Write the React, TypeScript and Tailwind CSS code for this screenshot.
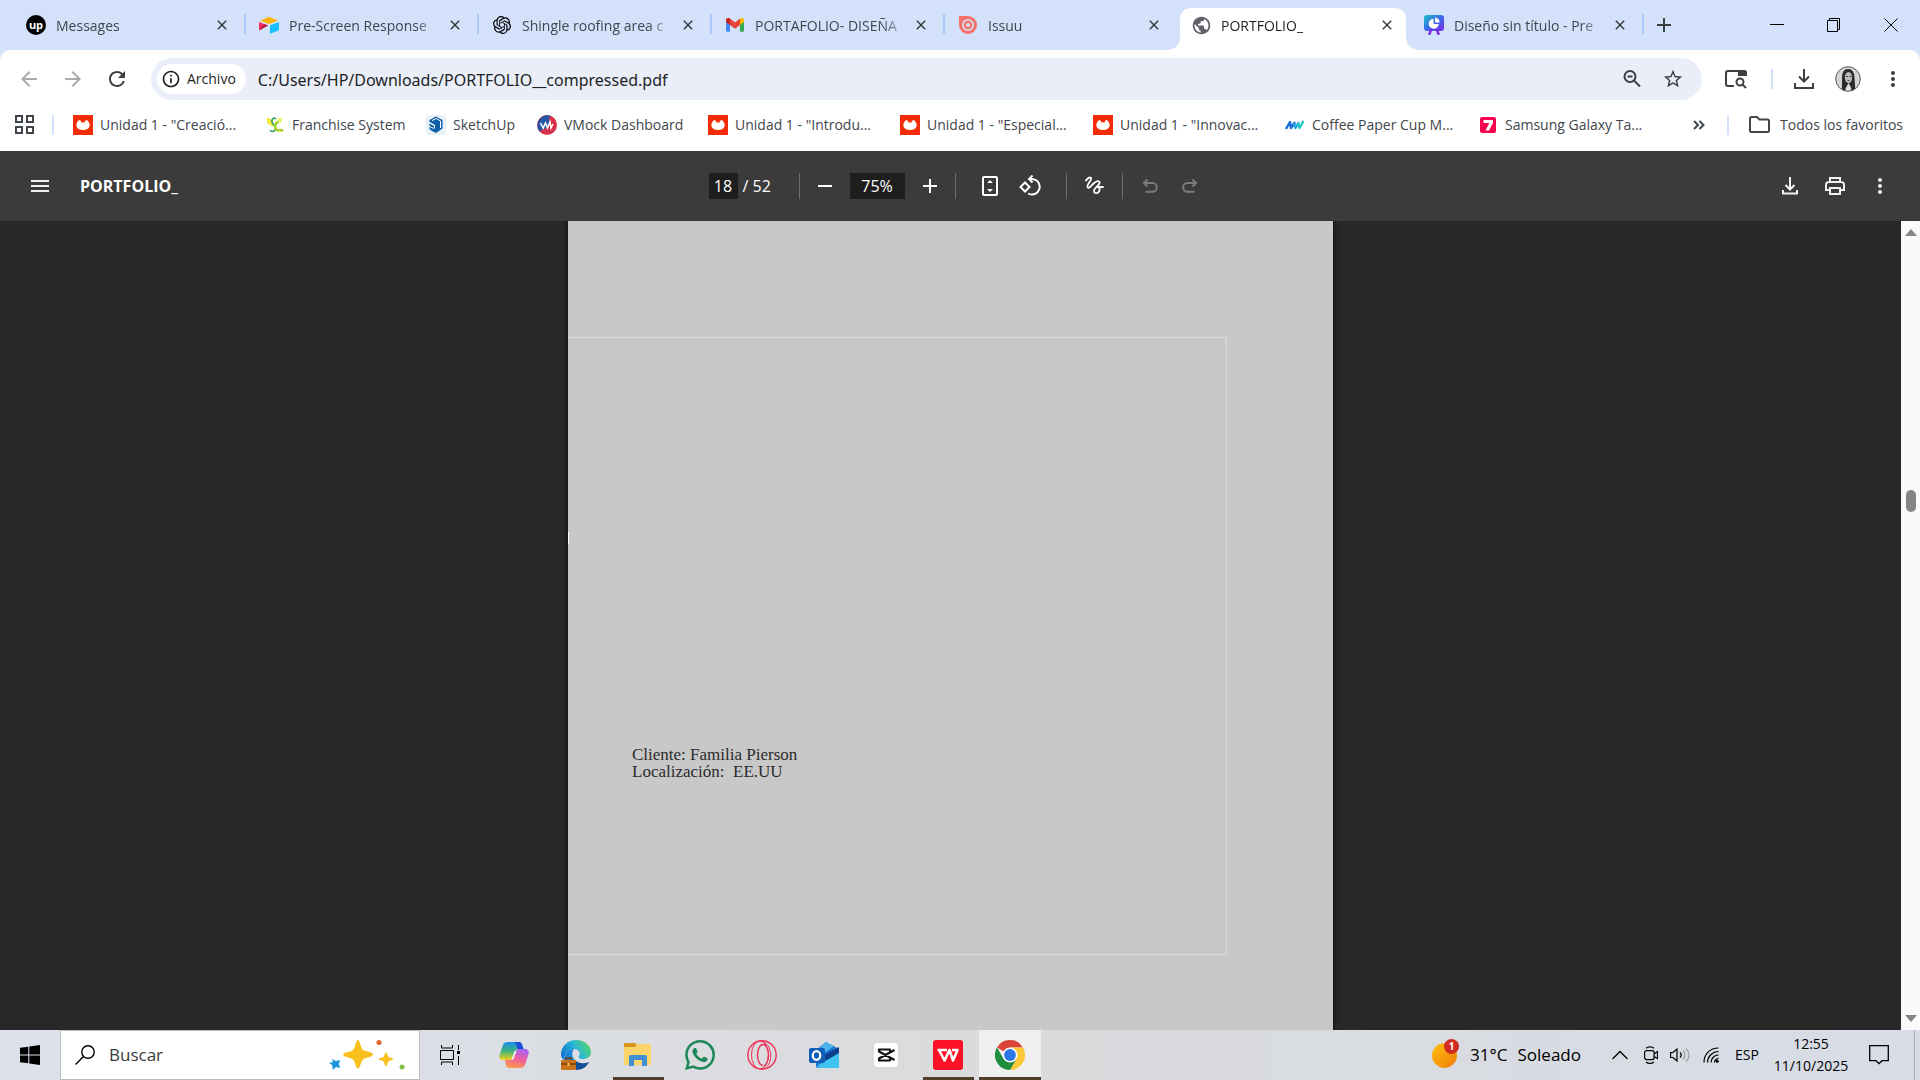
import React from "react";
import {
  MdArrowBack,
  MdArrowForward,
  MdClose,
  MdInfoOutline,
  MdMoreVert,
  MdPublic,
  MdRefresh,
  MdStarBorder,
} from "react-icons/md";
import { SiOpenai, SiWhatsapp } from "react-icons/si";
import clsx from "clsx";

/* ---------- Favicons ---------- */

function UpworkIcon() {
  return (
    <span className="flex items-center justify-center w-5 h-5 rounded-full bg-black text-white text-[11px] leading-none font-bold pb-0.5">
      up
    </span>
  );
}

function AirtableIcon() {
  return (
    <svg viewBox="0 0 20 20" className="w-5 h-5">
      <path d="M1 5.5 10 2l9 3.5-9 3.6z" fill="#fcb400" />
      <path d="M11 10.3 20 7v8.2l-9 3.6z" fill="#18bfff" />
      <path d="M0 7l9 3.6L0 15.4z" fill="#f82b60" />
      <path d="M0 15.4 5 9l4 1.6z" fill="#ba1e45" />
    </svg>
  );
}

function GmailIcon() {
  return (
    <svg viewBox="0 0 20 16" className="w-5 h-4">
      <path d="M1 3v10.5a1.3 1.3 0 0 0 1.3 1.3H5V6z" fill="#4285f4" />
      <path d="M15 6v8.8h2.7a1.3 1.3 0 0 0 1.3-1.3V3z" fill="#34a853" />
      <path d="M15 1.6V8l4-3V3c0-2-2-2.6-3.2-1.7z" fill="#fbbc04" />
      <path d="M5 8V1.6l5 3.8 5-3.8V8l-5 3.8z" fill="#ea4335" />
      <path d="M1 3v2l4 3V1.6l-.8-.4C3 .4 1 1.2 1 3z" fill="#c5221f" />
    </svg>
  );
}

function IssuuIcon() {
  return (
    <svg viewBox="0 0 20 20" className="w-5 h-5">
      <path d="M1 1h9a9 9 0 1 1-9 9z" fill="#f6716a" />
      <circle cx="10" cy="10" r="5.2" fill="none" stroke="#d7e2fa" strokeWidth="1.6" />
      <circle cx="10" cy="10" r="2" fill="#d7e2fa" />
    </svg>
  );
}

function PresentationIcon() {
  return (
    <svg viewBox="0 0 20 20" className="w-5 h-5">
      <defs>
        <linearGradient id="deck" x1="0" y1="0" x2="1" y2="1">
          <stop offset="0" stopColor="#12c2c4" />
          <stop offset="0.5" stopColor="#3d6be8" />
          <stop offset="1" stopColor="#7d2ae8" />
        </linearGradient>
      </defs>
      <path d="M3 0h14a3 3 0 0 1 3 3v10a3 3 0 0 1-3 3H3a3 3 0 0 1-3-3V3a3 3 0 0 1 3-3z" fill="url(#deck)" />
      <path d="M7 15l-1.5 4M13 15l1.5 4" stroke="#7d2ae8" strokeWidth="2.4" strokeLinecap="round" />
      <path d="M9.5 3.8V9h5.2A5 5 0 1 1 9.5 3.8z" fill="#fff" />
      <path d="M11 2.4A5 5 0 0 1 15.6 7.5H11z" fill="#fff" />
    </svg>
  );
}

function DomestikaIcon() {
  return (
    <svg viewBox="0 0 20 20" className="w-5 h-5">
      <path d="M0 0h20v20H0z" fill="#f22c06" />
      <path d="M6 5c1.200 0 2.400 1.300 2.700 3L10 7l1.300 1C11.600 6.300 12.800 5 14 5c2 1.800 3 4 2.600 6C16 13.600 13.500 15 10 15s-6-1.400-6.600-4C3 9 4 6.800 6 5z" fill="#fff" />
    </svg>
  );
}

function FranchiseIcon() {
  return (
    <svg viewBox="0 0 20 20" className="w-5 h-5" fill="none">
      <path d="M2 2l6 4v6l-6-4zM12 4l5-1-1 5z" fill="#f4ec3d" />
      <path d="M11 4C9 2 6 4 7 7s5 4 3 8c-1 2-4 2-5 0" stroke="#2aa05a" strokeWidth="1.600" />
      <path d="M14 7c-4 0-5 6-2 8 2 1 4-1 6 1" stroke="#a8d22b" strokeWidth="2.600" />
    </svg>
  );
}

function SketchUpIcon() {
  return (
    <svg viewBox="0 0 20 20" className="w-5 h-5" fill="none">
      <path d="M0 0h20v20H0z" fill="#e9f1f8" />
      <path d="M10 1.500l6.500 3.600v8.500L10 18l-5-2.600 4-2.300V10L3.500 7V5z" fill="#0f5fa6" />
      <path d="M4 8l5 2.800M4 11l4 2.200M6 5.500l4.500-2 4 2.500v7" stroke="#fff" />
      <path d="M3.500 8.600L8 11v2l-4.500-2zM3.500 12L8 14v2.500l-4.500-2.300z" fill="#0f5fa6" />
    </svg>
  );
}

function VMockIcon() {
  return (
    <svg viewBox="0 0 20 20" className="w-5 h-5">
      <circle cx="10" cy="10" r="10" fill="#d6304a" />
      <path d="M3 17A10 10 0 0 1 14 1C9 4 15 9 11 12s-6 1-8 5z" fill="#2456a8" />
      <path d="M3.500 8l2.700 5 2.300-5 2 5 2.500-6 1 6 2-4" stroke="#fff" strokeWidth="1.500" fill="none" />
    </svg>
  );
}

function MockupIcon() {
  return (
    <svg viewBox="0 0 20 20" className="w-5 h-5" fill="none" strokeWidth="2.400" strokeLinejoin="round">
      <path d="M1 14l4-7 1 6 4-6" stroke="#1c6fd6" />
      <path d="M9 8l1.500 5 3.500-6" stroke="#1aa3e0" />
      <path d="M13 8l1.500 5 4-7" stroke="#1fc6c2" />
    </svg>
  );
}

function SevenIcon() {
  return (
    <svg viewBox="0 0 16 16" className="w-4 h-4">
      <rect width="16" height="16" rx="2" fill="#f5054f" />
      <path d="M3.500 3h9.500v3L9 13.500H5.500L9.300 6H3.500z" fill="#fff" />
    </svg>
  );
}

/* ---------- Tab strip ---------- */

const tabs = [
  { title: "Messages", icon: <UpworkIcon /> },
  { title: "Pre-Screen Response", icon: <AirtableIcon /> },
  { title: "Shingle roofing area c", icon: <SiOpenai className="w-[18px] h-[18px]" /> },
  { title: "PORTAFOLIO- DISEÑA", icon: <GmailIcon /> },
  { title: "Issuu", icon: <IssuuIcon /> },
  { title: "PORTFOLIO_", icon: <MdPublic className="w-[21px] h-[21px] text-[#5f6368]" />, active: true },
  { title: "Diseño sin título - Pre", icon: <PresentationIcon /> },
];

function TabStrip() {
  return (
    <div className="flex items-end h-[50px] pl-[13px] bg-[#d3e1fa]">
      {tabs.map((tab, i) => {
        const bare = tab.active || tabs[i + 1]?.active;
        return (
          <div
            key={tab.title}
            className={clsx(
              "relative flex items-center w-[233px] min-w-0 h-[42px] pl-3 pr-4 pb-2",
              !bare && "after:absolute after:right-0 after:top-1.5 after:w-0.5 after:h-5 after:bg-[#a8c7fa]"
            )}
          >
            {tab.active && (
              <svg viewBox="0 0 254 42" preserveAspectRatio="none" className="absolute -left-3 top-0 w-[254px] h-[42px]">
                <path d="M0 42c9 0 14-5 14-14V12C14 4 18 0 26 0h202c8 0 12 4 12 12v16c0 9 5 14 14 14z" fill="#fff" />
              </svg>
            )}
            <span className="relative flex items-center justify-center w-[22px] shrink-0">{tab.icon}</span>
            <span
              className={clsx(
                "relative flex-1 ml-[9px] mr-1 pt-px whitespace-nowrap text-sm",
                "[mask-image:linear-gradient(to_right,black_82%,transparent)]",
                tab.active ? "text-[#1f1f1f]" : "text-[#41464d]"
              )}
            >
              {tab.title}
            </span>
            <button aria-label={"Cerrar " + tab.title} className="relative text-[#303236]">
              <MdClose className="w-4 h-4" />
            </button>
          </div>
        );
      })}
      <button aria-label="Nueva pestaña" className="flex items-center justify-center w-10 h-[34px] mb-2 text-[#3c4043]">
        <svg viewBox="0 0 14 14" className="w-3.5 h-3.5" stroke="currentColor" strokeWidth="2">
          <path d="M7 0v14M0 7h14" />
        </svg>
      </button>
      <div className="flex ml-auto mr-px self-start text-black">
        <button aria-label="Minimizar" className="flex items-center justify-center w-[57px] h-[49px]">
          <svg viewBox="0 0 14 14" className="w-3.5 h-3.5" stroke="currentColor">
            <path d="M0 6.500h14" />
          </svg>
        </button>
        <button aria-label="Restaurar" className="flex items-center justify-center w-[57px] h-[49px]">
          <svg viewBox="0 0 14 14" className="w-3.5 h-3.5" fill="none" stroke="currentColor">
            <path d="M.5 2.500h10v11H.5zM2.500 2.500V.5h10v11h-2" />
          </svg>
        </button>
        <button aria-label="Cerrar" className="flex items-center justify-center w-[57px] h-[49px]">
          <svg viewBox="0 0 14 14" className="w-3.5 h-3.5" stroke="currentColor">
            <path d="M.5.5l13 13M13.500.5l-13 13" />
          </svg>
        </button>
      </div>
    </div>
  );
}

/* ---------- Address bar ---------- */

function Avatar() {
  return (
    <svg viewBox="0 0 26 26" className="w-[26px] h-[26px]">
      <clipPath id="face">
        <circle cx="13" cy="13" r="12" />
      </clipPath>
      <g clipPath="url(#face)">
        <path d="M0 0h26v26H0z" fill="#d4d4d4" />
        <path d="M7 26V12c0-6 2-9 6-9s6.500 3 6.500 9l1 14z" fill="#2b2b2b" />
        <ellipse cx="13.500" cy="11.500" rx="3.600" ry="5.500" fill="#bdbdbd" />
        <path d="M10 26c0-4 2-6 3.500-9 2 3 3 5 3 9z" fill="#e2e2e2" />
        <path d="M11 10.500h2M14.500 10.500h2M12.500 14.500h2" stroke="#444" />
      </g>
      <circle cx="13" cy="13" r="12.300" fill="none" stroke="#555" />
    </svg>
  );
}

function AddressBar() {
  return (
    <div className="flex items-center h-[58px] pl-[17px] pr-[15px] text-[#3c4043]">
      <div className="flex items-center gap-5 shrink-0">
        <button aria-label="Atrás" className="text-[#a9abae]"><MdArrowBack className="w-6 h-6" /></button>
        <button aria-label="Adelante" className="text-[#a9abae]"><MdArrowForward className="w-6 h-6" /></button>
        <button aria-label="Volver a cargar"><MdRefresh className="w-6 h-6" /></button>
      </div>
      <div className="flex items-center flex-1 h-[42px] ml-[22px] pl-1.5 pr-[18px] rounded-full bg-[#e9eef9]">
        <button className="flex items-center gap-1.5 h-[30px] pl-1 pr-2.5 rounded-full bg-white text-sm font-medium text-[#1f1f1f]">
          <MdInfoOutline className="w-5 h-5" />
          Archivo
        </button>
        <input
          aria-label="Dirección"
          defaultValue="C:/Users/HP/Downloads/PORTFOLIO__compressed.pdf"
          className="flex-1 min-w-0 ml-3 pt-px bg-transparent font-['Noto_Sans',sans-serif] text-base text-[#1f1f1f] outline-none"
        />
        <button aria-label="Zoom" className="mr-5">
          <svg viewBox="0 0 20 20" className="w-5 h-5" fill="none" stroke="currentColor" strokeWidth="2">
            <circle cx="8" cy="7.500" r="5.500" />
            <path d="M12 11.500l6 6M5.500 7.500h5" />
          </svg>
        </button>
        <button aria-label="Añadir a favoritos"><MdStarBorder className="w-[22px] h-[22px]" /></button>
      </div>
      <div className="flex items-center ml-[23px] shrink-0">
        <button aria-label="Buscar en la página">
          <svg viewBox="0 0 22 20" className="w-[22px] h-5" fill="none" stroke="currentColor" strokeWidth="2">
            <path d="M9 17H3a2 2 0 0 1-2-2V4a2 2 0 0 1 2-2h16a2 2 0 0 1 2 2v3" />
            <path d="M13 1h7l2 2v4h-9z" fill="currentColor" stroke="none" />
            <circle cx="15" cy="13" r="3.500" />
            <path d="M17.500 15.500L21 19" />
          </svg>
        </button>
        <span className="w-0.5 h-5 ml-6 mr-5 bg-[#d3e1fa]" />
        <button aria-label="Descargas">
          <svg viewBox="0 0 22 22" className="w-[22px] h-[22px]" fill="none" stroke="currentColor" strokeWidth="2">
            <path d="M11 1v12M6 8.500l5 5 5-5M2 15v5h18v-5" />
          </svg>
        </button>
        <button aria-label="Perfil" className="ml-5"><Avatar /></button>
        <button aria-label="Menú" className="ml-5"><MdMoreVert className="w-6 h-6" /></button>
      </div>
    </div>
  );
}

/* ---------- Bookmarks ---------- */

const bookmarks = [
  { title: 'Unidad 1 - "Creació...', icon: <DomestikaIcon />, width: "w-[192px]" },
  { title: "Franchise System", icon: <FranchiseIcon />, width: "w-[161px]" },
  { title: "SketchUp", icon: <SketchUpIcon />, width: "w-[111px]" },
  { title: "VMock Dashboard", icon: <VMockIcon />, width: "w-[171px]" },
  { title: 'Unidad 1 - "Introdu...', icon: <DomestikaIcon />, width: "w-[192px]" },
  { title: 'Unidad 1 - "Especial...', icon: <DomestikaIcon />, width: "w-[193px]" },
  { title: 'Unidad 1 - "Innovac...', icon: <DomestikaIcon />, width: "w-[192px]" },
  { title: "Coffee Paper Cup M...", icon: <MockupIcon />, width: "w-[193px]" },
  { title: "Samsung Galaxy Ta...", icon: <SevenIcon />, width: "w-[170px]" },
];

function BookmarksBar() {
  return (
    <nav className="flex items-center h-[43px] pb-2.5 pl-[15px] pr-[17px] text-sm text-[#41464d] whitespace-nowrap">
      <button aria-label="Aplicaciones" className="shrink-0">
        <svg viewBox="0 0 19 19" className="w-[19px] h-[19px]" fill="none" stroke="currentColor" strokeWidth="2">
          <path d="M1 1h6v6H1zM12 1h6v6h-6zM1 12h6v6H1zM12 12h6v6h-6z" />
        </svg>
      </button>
      <span className="w-0.5 h-5 ml-[18px] mr-[19px] bg-[#d3e1fa] shrink-0" />
      {bookmarks.map((b) => (
        <a key={b.title} href="#" className={clsx("flex items-center gap-[7px] min-w-0", b.width)}>
          <span className="flex items-center justify-center w-5 shrink-0">{b.icon}</span>
          {b.title}
        </a>
      ))}
      <button aria-label="Más favoritos" className="ml-auto">
        <svg viewBox="0 0 12 10" className="w-3 h-2.5" fill="none" stroke="currentColor" strokeWidth="2">
          <path d="M1 1l4 4-4 4M6.500 1l4 4-4 4" />
        </svg>
      </button>
      <span className="w-0.5 h-5 ml-[22px] mr-5 bg-[#d3e1fa]" />
      <a href="#" className="flex items-center gap-2.5">
        <svg viewBox="0 0 21 17" className="w-[21px] h-[17px]" fill="none" stroke="currentColor" strokeWidth="2">
          <path d="M2.500 1H8l2.500 2.500h8A1.500 1.500 0 0 1 20 5v9.500a1.500 1.500 0 0 1-1.500 1.500h-16A1.500 1.500 0 0 1 1 14.500v-12A1.500 1.500 0 0 1 2.500 1z" />
        </svg>
        Todos los favoritos
      </a>
    </nav>
  );
}

/* ---------- PDF viewer ---------- */

function Divider() {
  return <span className="w-px h-[26px] bg-[#6d6d6d] shrink-0" />;
}

function PdfToolbar() {
  return (
    <div className="grid grid-cols-[1fr_auto_1fr] items-center h-[70px] bg-[#3b3b3b] text-[#f1f1f1]">
      <div className="flex items-center pl-[31px]">
        <button aria-label="Menú lateral">
          <svg viewBox="0 0 18 12" className="w-[18px] h-3" stroke="currentColor" strokeWidth="2">
            <path d="M0 1h18M0 6h18M0 11h18" />
          </svg>
        </button>
        <h1 className="ml-[31px] text-base font-bold text-white">PORTFOLIO_</h1>
      </div>
      <div className="flex items-center pr-2.5 text-base text-white">
        <input aria-label="Página" defaultValue="18" className="w-[29px] h-[26px] bg-[#1e1e1e] text-center outline-none" />
        <span className="w-[61px] pl-[5px]">/ 52</span>
        <Divider />
        <button aria-label="Alejar" className="flex justify-center w-[50px]">
          <svg viewBox="0 0 14 14" className="w-3.5 h-3.5" stroke="currentColor" strokeWidth="2">
            <path d="M0 7h14" />
          </svg>
        </button>
        <input aria-label="Nivel de zoom" defaultValue="75%" className="w-[55px] h-[26px] bg-[#1e1e1e] text-center outline-none" />
        <button aria-label="Acercar" className="flex justify-center w-[50px]">
          <svg viewBox="0 0 14 14" className="w-3.5 h-3.5" stroke="currentColor" strokeWidth="2">
            <path d="M0 7h14M7 0v14" />
          </svg>
        </button>
        <Divider />
        <button aria-label="Ajustar a la página" className="flex justify-center w-5 ml-6">
          <svg viewBox="0 0 16 20" className="w-4 h-5" fill="none" stroke="currentColor" strokeWidth="2">
            <rect x="1" y="1" width="14" height="18" rx="1" />
            <path d="M8 4l3 3H5zM8 16l3-3H5z" fill="currentColor" stroke="none" />
          </svg>
        </button>
        <button aria-label="Girar" className="flex justify-center w-6 ml-[18px]">
          <svg viewBox="0 0 22 22" className="w-[22px] h-[22px]" fill="none" stroke="currentColor" strokeWidth="2">
            <path d="M6 7.500l4.500 4.500L6 16.500 1.500 12z" />
            <path d="M11 4h2a7.700 7.700 0 0 1 0 15.500c-1.500 0-3-.4-4-1" />
            <path d="M13.500.5L10 4l3.500 3.500" />
          </svg>
        </button>
        <span className="w-6" />
        <Divider />
        <button aria-label="Dibujar" className="flex justify-center w-[55px]">
          <svg viewBox="0 0 20 20" className="w-5 h-5" fill="none" stroke="currentColor" strokeWidth="1.800" strokeLinecap="round">
            <path d="M2 4.500C3.500 2 6 .8 7 2c1.500 2-4.500 6-3.500 9 1 2.500 3.500-1 5.500-3s5-4 6.500-2c1.500 2.500-5 5-5.500 8.500-.3 3 3.500 3.500 5 1 1-2 .5-5-1.500-5" />
            <path d="M13.500 11h5.500" />
          </svg>
        </button>
        <Divider />
        <button aria-label="Deshacer" disabled className="flex justify-center w-[55px] text-[#7b7b7b]">
          <svg viewBox="0 0 16 16" className="w-4 h-4" fill="none" stroke="currentColor" strokeWidth="2">
            <path d="M5.500 1.500L2 5l3.500 3.500M2 5h8.500a4.300 4.300 0 0 1 0 8.700H3.500" />
          </svg>
        </button>
        <button aria-label="Rehacer" disabled className="flex justify-center w-6 text-[#7b7b7b]">
          <svg viewBox="0 0 16 16" className="w-4 h-4" fill="none" stroke="currentColor" strokeWidth="2">
            <path d="M10.500 1.500L14 5l-3.500 3.500M14 5H5.500a4.300 4.300 0 0 0 0 8.700h7" />
          </svg>
        </button>
      </div>
      <div className="flex items-center justify-end gap-[23px] pr-7">
        <button aria-label="Descargar">
          <svg viewBox="0 0 16 18" className="w-4 h-[18px]" fill="none" stroke="currentColor" strokeWidth="2">
            <path d="M8 0v12M3.500 8L8 12.500 12.500 8M1 13v3.500h14V13" />
          </svg>
        </button>
        <button aria-label="Imprimir" className="ml-1">
          <svg viewBox="0 0 20 18" className="w-5 h-[18px]" fill="none" stroke="currentColor" strokeWidth="2">
            <path d="M5 5V1h10v4M5 13H1V8a3 3 0 0 1 3-3h12a3 3 0 0 1 3 3v5h-4" />
            <path d="M5 11h10v6H5z" />
          </svg>
        </button>
        <button aria-label="Más acciones"><MdMoreVert className="w-6 h-6" /></button>
      </div>
    </div>
  );
}

function PdfViewer() {
  return (
    <main className="flex flex-1 min-h-0 bg-[#282828]">
      <div className="flex flex-1 justify-center overflow-hidden">
        <article className="w-[765px] h-full pt-[116px] bg-[#c8c8c8] shadow-[0_0_5px_#0a0a0a]">
          <div className="w-[659px] h-[618px] border border-l-0 border-[#dcdcdc]">
            <div className="w-px h-3 mt-[194px] bg-white" />
            <p className="mt-[202px] ml-16 whitespace-pre font-['Liberation_Serif',serif] text-[17px] leading-[17px] text-[#2b2b2b]">
              {"Cliente: Familia Pierson\nLocalización:  EE.UU"}
            </p>
          </div>
        </article>
      </div>
      <div className="flex flex-col items-center w-[19px] py-2 bg-[#fafafa] text-[#858585]">
        <svg viewBox="0 0 12 7" className="w-3 h-[7px]"><path d="M6 0l6 7H0z" fill="currentColor" /></svg>
        <span className="w-2.5 h-[22px] mt-[254px] rounded-full bg-[#858585]" />
        <svg viewBox="0 0 12 7" className="w-3 h-[7px] mt-auto"><path d="M6 7l6-7H0z" fill="currentColor" /></svg>
      </div>
    </main>
  );
}

/* ---------- Taskbar ---------- */

function CopilotIcon() {
  return (
    <svg viewBox="0 0 30 30" className="w-[30px] h-[30px]">
      <defs>
        <linearGradient id="cp1" x1="0" y1="0" x2="0" y2="1">
          <stop offset="0" stopColor="#1b8df0" />
          <stop offset="0.5" stopColor="#3fb37c" />
          <stop offset="1" stopColor="#f5d21f" />
        </linearGradient>
        <linearGradient id="cp2" x1="0.6" y1="0" x2="0.3" y2="1">
          <stop offset="0" stopColor="#a862f0" />
          <stop offset="0.5" stopColor="#f0609c" />
          <stop offset="1" stopColor="#ff9a4a" />
        </linearGradient>
      </defs>
      <path d="M9 2h11c2 0 3 2 3.500 4l1 3h-5c-2 0-3 1-3.500 3l-2 6c-.7 2-2 2-3 2H4c-3 0-4.500-2-3.500-5L4 5c.8-2 2-3 5-3z" fill="url(#cp1)" />
      <path d="M15 2h5c2 0 3 2 3.500 4l1 3h-6c-1-3-1-6-3.500-7z" fill="#1d4fd7" />
      <path d="M21 28H11c-3 0-4-2-4.500-5L6 20h5c2 0 3-1 3.500-3l2-5c.7-2 2-3 3-3H26c3 0 4.500 2 3.500 5L26 25c-.8 2-2 3-5 3z" fill="url(#cp2)" />
      <path d="M15.500 11h2l-3 8.500h-2z" fill="#eef0f8" />
    </svg>
  );
}

function EdgeIcon() {
  return (
    <svg viewBox="0 0 30 30" className="w-[30px] h-[30px]">
      <defs>
        <linearGradient id="edge" x1="0" y1="0.6" x2="1" y2="0.2">
          <stop offset="0" stopColor="#1277d4" />
          <stop offset="0.5" stopColor="#2cb9d6" />
          <stop offset="1" stopColor="#5bd65f" />
        </linearGradient>
      </defs>
      <path d="M0 15C0 6 7 0 15 0c9 0 15 6 15 12 0 5-4 7-8 7-3 0-5-1-4-3 2-3 0-7-5-7C7 9 3 14 3 20c-2-2-3-3-3-5z" fill="url(#edge)" />
      <path d="M3 20c0-6 4-11 10-11-3 4-2 9 2 12z" fill="#1b86d8" />
      <path d="M14 20c4 4 9 4 14 2-2 5-7 8-13 8z" fill="#124f95" />
      <rect x="0" y="20" width="15" height="10" rx="1" fill="#c9731a" />
      <path d="M0 24h15M5 20v-2h5v2" stroke="#7a3d08" fill="none" strokeWidth="1.500" />
      <path d="M6.500 23h2v3h-2z" fill="#f7c64a" />
    </svg>
  );
}

function FolderIcon() {
  return (
    <svg viewBox="0 0 30 30" className="w-[30px] h-[30px]">
      <path d="M1 4a1 1 0 0 1 1-1h10l2 2-2 3H1z" fill="#d9951b" />
      <path d="M1 7h11l2-3h13a1 1 0 0 1 1 1v20H2a1 1 0 0 1-1-1z" fill="#fbd569" />
      <path d="M6 26V17a2 2 0 0 1 2-2h14a2 2 0 0 1 2 2v9h-5v-6h-8v6z" fill="#3f8fd2" />
    </svg>
  );
}

function OperaIcon() {
  return (
    <svg viewBox="0 0 30 30" className="w-[30px] h-[30px]" fill="none" stroke="#ef3158" strokeWidth="1.400">
      <circle cx="15" cy="15" r="14.200" />
      <ellipse cx="13" cy="15" rx="8.500" ry="14" strokeWidth="1" />
      <path d="M16 4.500c-3 0-5.500 4.500-5.500 10.500s2.500 10.500 5.500 10.500M16 4.500c3 0 5.500 4.500 5.500 10.500S19 25.500 17 25.500" />
      <path d="M13 1c14 1 14 27 2 28" strokeWidth="1" />
    </svg>
  );
}

function OutlookIcon() {
  return (
    <svg viewBox="0 0 30 30" className="w-[30px] h-[30px]">
      <path d="M7 10L17 2l13 7v17a2 2 0 0 1-2 2H9a2 2 0 0 1-2-2z" fill="#1d76cf" />
      <path d="M12 7l5-5 8 4-11 8z" fill="#4bb4ec" />
      <path d="M15 15L30 7v6l-13 9z" fill="#103f8c" />
      <path d="M8 26L30 13v13a2 2 0 0 1-2 2H10z" fill="#3fc3ef" />
      <rect x="0" y="8" width="16" height="15" rx="2" fill="#0f5fb8" />
      <ellipse cx="7.500" cy="15.500" rx="3.700" ry="4.300" fill="none" stroke="#fff" strokeWidth="2.200" />
    </svg>
  );
}

function CapCutIcon() {
  return (
    <svg viewBox="0 0 24 24" className="w-6 h-6">
      <rect width="24" height="24" rx="4" fill="#fff" />
      <path
        d="M20.500 7L5 15.500V17.500h11V15.500M20.500 17L5 8.500V6.500h11V8.500"
        fill="none"
        stroke="#111"
        strokeWidth="2.200"
        strokeLinejoin="round"
      />
    </svg>
  );
}

function WpsIcon() {
  return (
    <svg viewBox="0 0 30 30" className="w-[30px] h-[30px]">
      <rect width="30" height="30" rx="3" fill="#fb1224" />
      <path
        d="M4.500 10H14M6 10l5.500 10.500L16.500 10l3.500 10.500L24.500 10H19"
        fill="none"
        stroke="#fff"
        strokeWidth="2.600"
        strokeLinejoin="round"
      />
    </svg>
  );
}

function ChromeIcon() {
  return (
    <svg viewBox="0 0 30 30" className="w-[30px] h-[30px]">
      <path d="M15 15L2 7.500A15 15 0 0 1 28 7.500H15z" fill="#dc4437" />
      <path d="M15 7.500H28A15 15 0 0 1 15 30l6.500-11.200z" fill="#fcc934" />
      <path d="M15 15l6.500 3.800L15 30A15 15 0 0 1 2 7.500l6.500 11.300z" fill="#1e8e3e" />
      <circle cx="15" cy="15" r="7.500" fill="#fff" />
      <circle cx="15" cy="15" r="5.900" fill="#2b76e8" />
    </svg>
  );
}

const pinned = [
  { name: "Copilot", icon: <CopilotIcon /> },
  { name: "Edge", icon: <EdgeIcon /> },
  { name: "Explorador de archivos", icon: <FolderIcon />, open: true },
  { name: "WhatsApp", icon: <SiWhatsapp className="w-[30px] h-[30px] text-[#1e8757]" /> },
  { name: "Opera", icon: <OperaIcon /> },
  { name: "Outlook", icon: <OutlookIcon /> },
  { name: "CapCut", icon: <CapCutIcon /> },
  { name: "WPS Office", icon: <WpsIcon />, open: true },
  { name: "Chrome", icon: <ChromeIcon />, open: true, focused: true },
];

function Sparkles() {
  return (
    <svg viewBox="0 0 76 30" className="w-[76px] h-[30px]">
      <path d="M29 0c2 0 3 9 5 10s10 2 10 4.500-8 3-10 5-3 9-5 9-3-7-5-9-10-2.500-10-5S22 12 24 10s3-10 5-10z" fill="#f9bf1d" />
      <path d="M57 12c1 0 1.500 4 2.500 5s5 1 5 2-4 1.500-5 2.500-1.500 5-2.500 5-1.500-4-2.500-5-5-1.500-5-2.500 4-1 5-2 1.500-5 2.500-5z" fill="#f9bf1d" />
      <path d="M3 19l4 2 4-1-1 4 1 4-4-1-3 3-1-5-3-2 4-1z" fill="#1c97d8" />
      <circle cx="50" cy="2.500" r="2.500" fill="#e0642f" />
      <circle cx="73" cy="27" r="2.500" fill="#86bc48" />
    </svg>
  );
}

function Taskbar() {
  return (
    <footer className="flex items-stretch h-[50px] shrink-0 bg-linear-to-r from-[#dce1ec] via-[#dadbdc] to-[#d7dce6] text-black">
      <button aria-label="Inicio" className="flex items-center justify-center w-[60px]">
        <svg viewBox="0 0 20 20" className="w-5 h-5">
          <path d="M0 2.800L8.300 1.700V9.500H0zM9.300 1.500L20 0v9.500H9.300zM0 10.500h8.300v7.800L0 17.200zM9.300 10.500H20V20L9.300 18.500z" />
        </svg>
      </button>
      <label className="flex items-center w-[360px] px-3.5 border border-[#b9bbbe] bg-white">
        <svg viewBox="0 0 20 20" className="w-5 h-5" fill="none" stroke="currentColor" strokeWidth="1.400">
          <circle cx="13" cy="7" r="6.200" />
          <path d="M8.500 11.500L.5 19.500" />
        </svg>
        <input placeholder="Buscar" className="flex-1 min-w-0 ml-3.5 text-[17px] placeholder:text-[#3a3a3a] outline-none" />
        <Sparkles />
      </label>
      <button aria-label="Vista de tareas" className="flex items-center justify-center w-[60px] mr-[3px]">
        <svg viewBox="0 0 20 20" className="w-5 h-5" fill="none" stroke="currentColor">
          <path d="M.5 5.500h13v9H.5zM1.500 0v3h11V0M1.500 20v-3h11v3M18.500 0v5M18.500 11v9" />
          <path d="M17 6h3v3h-3z" fill="currentColor" stroke="none" />
        </svg>
      </button>
      {pinned.map((app) => (
        <button
          key={app.name}
          aria-label={app.name}
          className={clsx("flex flex-col w-[62px] items-center", app.focused && "bg-[#efefef]")}
        >
          <span className="flex flex-1 items-center justify-center pt-[3px]">{app.icon}</span>
          <span className={clsx("h-[3px]", app.focused ? "w-full" : "w-[51px]", app.open && "bg-[#4f3f2b]")} />
        </button>
      ))}
      <div className="flex items-center ml-auto">
        <button className="flex items-center text-[17px] whitespace-nowrap">
          <span className="relative w-[25px] h-[25px] mr-[13px] rounded-full bg-linear-to-br from-[#fdc00e] to-[#f07a0c]">
            <span className="absolute -right-0.5 -top-1 flex items-center justify-center w-[15px] h-[15px] rounded-full bg-[#cf2b20] text-[10px] leading-none font-bold text-white">
              1
            </span>
          </span>
          <span>31°C</span>
          <span className="ml-2.5">Soleado</span>
        </button>
        <div className="flex items-center ml-[31px]">
          <button aria-label="Iconos ocultos">
            <svg viewBox="0 0 16 10" className="w-4 h-2.5" fill="none" stroke="currentColor" strokeWidth="1.300">
              <path d="M.5 9L8 1.500 15.500 9" />
            </svg>
          </button>
          <button aria-label="Cámara" className="ml-4">
            <svg viewBox="0 0 14 18" className="w-3.5 h-[18px]" fill="none" stroke="currentColor" strokeWidth="1.200">
              <rect x=".6" y="4.600" width="9.500" height="9" rx="2" />
              <path d="M10 8l3.500-2.500v7L10 10.500M2 2.200C4 .4 8 .4 10 2.200M2 16c2 1.800 6 1.800 8 0" />
            </svg>
          </button>
          <button aria-label="Volumen" className="ml-3">
            <svg viewBox="0 0 20 16" className="w-5 h-4" fill="none" stroke="currentColor" strokeWidth="1.200">
              <path d="M.6 5.500H3L7 2v12l-4-3.500H.6z" />
              <path d="M10 5.500c1.500 1.500 1.500 3.500 0 5" />
              <path d="M13 3.500c2.500 2.500 2.500 6.500 0 9M16 1.500c4 4 4 9 0 13" stroke="#999" />
            </svg>
          </button>
          <button aria-label="Red" className="ml-[13px]">
            <svg viewBox="0 0 16 16" className="w-4 h-4" fill="none" stroke="currentColor" strokeWidth="1.200">
              <path d="M1 15.500C1 7 7 1 15.500 1M4.500 15.500c0-6 5-11 11-11M8 15.500C8 11.500 11.500 8 15.500 8M11.500 15.500c0-2 2-4 4-4" />
              <circle cx="14.200" cy="14.200" r="1.500" fill="currentColor" stroke="none" />
            </svg>
          </button>
          <button className="w-10 text-sm text-center ml-2">ESP</button>
        </div>
        <div className="w-[84px] ml-0.5 text-center text-sm leading-[22px]">
          <div>12:55</div>
          <div>11/10/2025</div>
        </div>
        <button aria-label="Notificaciones" className="ml-4">
          <svg viewBox="0 0 20 20" className="w-5 h-5" fill="none" stroke="currentColor" strokeWidth="1.300">
            <path d="M.7.7h18.600v15H13l-3 3-3-3H.7z" />
          </svg>
        </button>
        <span className="w-px h-full ml-[25px] mr-[5px] bg-[#aab0bb]" />
      </div>
    </footer>
  );
}

export default function App() {
  return (
    <div className="flex flex-col h-screen overflow-hidden font-['Open_Sans','Noto_Sans',sans-serif]">
      <TabStrip />
      <div className="shrink-0 bg-[#d3e1fa]">
        <div className="rounded-t-[10px] bg-white">
          <AddressBar />
          <BookmarksBar />
        </div>
      </div>
      <PdfToolbar />
      <PdfViewer />
      <Taskbar />
    </div>
  );
}
